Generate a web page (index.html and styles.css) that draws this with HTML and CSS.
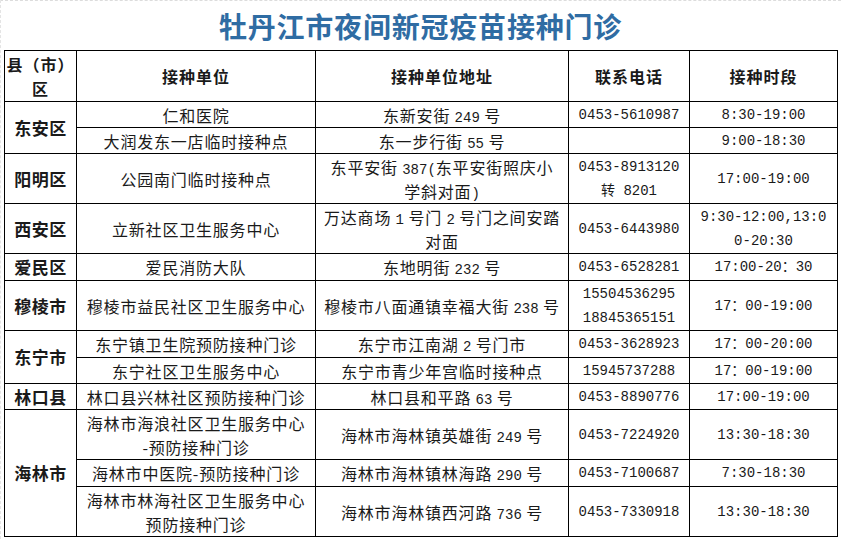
FILE: index.html
```html
<!DOCTYPE html>
<html lang="zh-CN">
<head>
<meta charset="utf-8">
<title>牡丹江市夜间新冠疫苗接种门诊</title>
<link rel="stylesheet" href="styles.css">
</head>
<body>
<div class="page">
  <h1 class="title">牡丹江市夜间新冠疫苗接种门诊</h1>
  <table class="grid">
    <colgroup>
      <col class="c1"><col class="c2"><col class="c3"><col class="c4"><col class="c5">
    </colgroup>
    <thead>
      <tr class="hd">
        <th>县（市）<br>区</th>
        <th>接种单位</th>
        <th>接种单位地址</th>
        <th>联系电话</th>
        <th>接种时段</th>
      </tr>
    </thead>
    <tbody>
      <tr class="s">
        <td class="dist" rowspan="2">东安区</td>
        <td>仁和医院</td>
        <td>东新安街 <span class="n">249</span> 号</td>
        <td class="n">0453-5610987</td>
        <td class="n">8:30-19:00</td>
      </tr>
      <tr class="s">
        <td>大润发东一店临时接种点</td>
        <td>东一步行街 <span class="n">55</span> 号</td>
        <td></td>
        <td class="n">9:00-18:30</td>
      </tr>
      <tr class="d">
        <td class="dist">阳明区</td>
        <td>公园南门临时接种点</td>
        <td>东平安街 <span class="n">387(</span>东平安街照庆小<br>学斜对面<span class="n">)</span></td>
        <td class="n">0453-8913120<br>转 8201</td>
        <td class="n">17:00-19:00</td>
      </tr>
      <tr class="d">
        <td class="dist">西安区</td>
        <td>立新社区卫生服务中心</td>
        <td>万达商场 <span class="n">1</span> 号门 <span class="n">2</span> 号门之间安踏<br>对面</td>
        <td class="n">0453-6443980</td>
        <td class="n">9:30-12:00,13:0<br>0-20:30</td>
      </tr>
      <tr class="s t">
        <td class="dist">爱民区</td>
        <td>爱民消防大队</td>
        <td>东地明街 <span class="n">232</span> 号</td>
        <td class="n">0453-6528281</td>
        <td class="n">17:00-20：30</td>
      </tr>
      <tr class="d">
        <td class="dist">穆棱市</td>
        <td>穆棱市益民社区卫生服务中心</td>
        <td>穆棱市八面通镇幸福大街 <span class="n">238</span> 号</td>
        <td class="n">15504536295<br>18845365151</td>
        <td class="n">17：00-19:00</td>
      </tr>
      <tr class="s t">
        <td class="dist" rowspan="2">东宁市</td>
        <td>东宁镇卫生院预防接种门诊</td>
        <td>东宁市江南湖 <span class="n">2</span> 号门市</td>
        <td class="n">0453-3628923</td>
        <td class="n">17：00-20:00</td>
      </tr>
      <tr class="s">
        <td>东宁社区卫生服务中心</td>
        <td>东宁市青少年宫临时接种点</td>
        <td class="n">15945737288</td>
        <td class="n">17：00-19:00</td>
      </tr>
      <tr class="s">
        <td class="dist">林口县</td>
        <td>林口县兴林社区预防接种门诊</td>
        <td>林口县和平路 <span class="n">63</span> 号</td>
        <td class="n">0453-8890776</td>
        <td class="n">17:00-19:00</td>
      </tr>
      <tr class="d">
        <td class="dist" rowspan="3">海林市</td>
        <td>海林市海浪社区卫生服务中心<br>-预防接种门诊</td>
        <td>海林市海林镇英雄街 <span class="n">249</span> 号</td>
        <td class="n">0453-7224920</td>
        <td class="n">13:30-18:30</td>
      </tr>
      <tr class="s t">
        <td>海林市中医院-预防接种门诊</td>
        <td>海林市海林镇林海路 <span class="n">290</span> 号</td>
        <td class="n">0453-7100687</td>
        <td class="n">7:30-18:30</td>
      </tr>
      <tr class="d">
        <td>海林市林海社区卫生服务中心<br>预防接种门诊</td>
        <td>海林市海林镇西河路 <span class="n">736</span> 号</td>
        <td class="n">0453-7330918</td>
        <td class="n">13:30-18:30</td>
      </tr>
    </tbody>
  </table>
</div>
</body>
</html>
```

FILE: styles.css
```css
html, body {
  margin: 0;
  padding: 0;
  background: #ffffff;
}

.page {
  width: 841px;
  height: 539px;
  box-sizing: border-box;
  padding: 0 4px 0 3px;
  border-top: 1px dashed #dcdcdc;
  border-left: 1px dashed #e4e4e4;
  font-family: "Noto Sans CJK SC", sans-serif;
  color: #111;
  overflow: hidden;
}

.title {
  margin: 0;
  height: 49px;
  display: flex;
  align-items: center;
  justify-content: center;
  font-size: 28px;
  font-weight: 700;
  letter-spacing: 0.8px;
  color: #2f6ca3;
  line-height: 1;
}

.grid {
  width: 833px;
  border-collapse: collapse;
  table-layout: fixed;
  border: 1.5px solid #000;
}

.c1 { width: 72px; }
.c2 { width: 239px; }
.c3 { width: 253px; }
.c4 { width: 121px; }
.c5 { width: 148px; }

.grid th,
.grid td {
  border: 1px solid #000;
  padding: 0;
  text-align: center;
  vertical-align: middle;
  font-size: 16px;
  line-height: 22px;
  letter-spacing: 0.8px;
  font-weight: 400;
  color: #1a1a1a;
  white-space: nowrap;
  overflow: hidden;
}

.grid th {
  font-weight: 700;
  letter-spacing: 1px;
  line-height: 24px;
}

.hd { height: 51px; }
.s { height: 26px; }
.s.t { height: 27px; }
.d { height: 50px; }

.grid tr.d td {
  line-height: 24px;
}

.grid td.dist {
  font-weight: 700;
  font-size: 17px;
  letter-spacing: 0.5px;
}

span.n {
  font-family: "Liberation Mono", monospace;
  font-size: 14px;
  letter-spacing: 0;
  line-height: 1;
}

.grid td.n {
  font-family: "Liberation Mono", "Noto Sans CJK SC", monospace;
  font-size: 14px;
  letter-spacing: 0;
}
```
